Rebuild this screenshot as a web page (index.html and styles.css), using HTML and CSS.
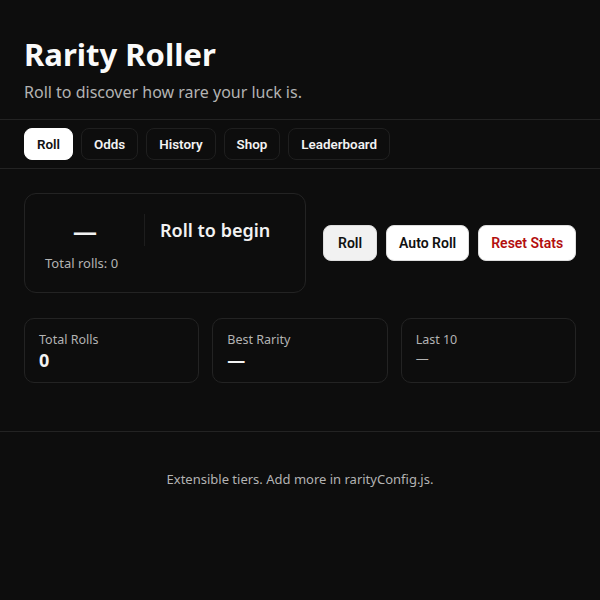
FILE: index.html
```html
<!DOCTYPE html>
<html lang="en">
<head>
<meta charset="utf-8">
<title>Rarity Roller</title>
<link rel="stylesheet" href="styles.css">
</head>
<body>
<header class="header">
  <h1 class="title">Rarity Roller</h1>
  <p class="subtitle">Roll to discover how rare your luck is.</p>
</header>
<nav class="tabs">
  <button class="tab active">Roll</button>
  <button class="tab">Odds</button>
  <button class="tab">History</button>
  <button class="tab">Shop</button>
  <button class="tab">Leaderboard</button>
</nav>
<main class="main">
  <section class="roll-row">
    <div class="result-card">
      <div class="result-top">
        <div class="rarity">—</div>
        <div class="divider"></div>
        <div class="result-label">Roll to begin</div>
      </div>
      <div class="result-sub">Total rolls: 0</div>
    </div>
    <div class="actions">
      <button class="btn btn-primary">Roll</button>
      <button class="btn">Auto Roll</button>
      <button class="btn btn-danger">Reset Stats</button>
    </div>
  </section>
  <section class="stats">
    <div class="stat">
      <div class="stat-label">Total Rolls</div>
      <div class="stat-value">0</div>
    </div>
    <div class="stat">
      <div class="stat-label">Best Rarity</div>
      <div class="stat-value">—</div>
    </div>
    <div class="stat">
      <div class="stat-label">Last 10</div>
      <div class="stat-value small">—</div>
    </div>
  </section>
</main>
<footer class="footer">Extensible tiers. Add more in rarityConfig.js.</footer>
</body>
</html>
```
FILE: styles.css
```css
* { box-sizing: border-box; }
html, body { margin: 0; padding: 0; }
body {
  background: #0d0d0d;
  color: #f2f2f2;
  font-family: "Noto Sans", "Open Sans", sans-serif;
  min-height: 600px;
}
.header {
  padding: 34px 24px 15px;
  border-bottom: 1px solid #232323;
}
.title {
  margin: 0;
  font-size: 31px;
  line-height: 40px;
  font-weight: 700;
  color: #fafafa;
}
.subtitle {
  margin: 6px 0 0;
  font-size: 16px;
  line-height: 24px;
  color: #b3b3b3;
}
.tabs {
  display: flex;
  gap: 8px;
  padding: 8px 24px;
  border-bottom: 1px solid #232323;
}
.tab {
  font-family: Roboto, sans-serif;
  font-size: 13.4px;
  font-weight: 600;
  height: 32px;
  padding: 0 12px;
  border-radius: 8px;
  border: 1px solid #1f1f1f;
  background: #0d0d0d;
  color: #f2f2f2;
}
.tab.active {
  background: #ffffff;
  color: #111;
  border-color: #ffffff;
}
.main {
  padding: 24px 24px 48px;
  border-bottom: 1px solid #232323;
}
.roll-row {
  display: flex;
  align-items: center;
  gap: 17px;
}
.result-card {
  flex: none;
  width: 282px;
  border: 1px solid #232323;
  border-radius: 12px;
  padding: 20px;
}
.result-top {
  display: flex;
  align-items: center;
  height: 32px;
}
.rarity {
  width: 80px;
  text-align: center;
  font-size: 24px;
  font-weight: 700;
}
.divider {
  width: 1px;
  height: 32px;
  background: #1d1d1d;
  margin: 0 15px 0 19px;
}
.result-label {
  font-size: 18px;
  font-weight: 600;
}
.result-sub {
  margin-top: 8px;
  font-size: 13px;
  line-height: 18px;
  color: #b3b3b3;
}
.actions {
  display: flex;
  flex: none;
  gap: 9px;
}
.btn {
  flex: none;
  white-space: nowrap;
  font-family: Roboto, sans-serif;
  font-size: 14px;
  font-weight: 600;
  height: 36px;
  padding: 0 12px;
  border-radius: 8px;
  border: 1px solid #ddd;
  background: #ffffff;
  color: #111;
}
.btn-primary { background: #f1f1f1; padding: 0 14px; }
.btn-danger { color: #b30f0f; }
.stats {
  margin-top: 25px;
  display: grid;
  grid-template-columns: repeat(3, 1fr);
  gap: 13px;
}
.stat {
  border: 1px solid #232323;
  border-radius: 10px;
  padding: 12px 14px;
  height: 65px;
}
.stat-label {
  font-size: 12.5px;
  line-height: 18px;
  color: #b3b3b3;
}
.stat-value {
  font-size: 18px;
  line-height: 22px;
  font-weight: 700;
}
.stat-value.small {
  font-size: 13px;
  font-weight: 400;
  color: #b3b3b3;
  line-height: 18px;
}
.footer {
  padding: 38px 24px;
  text-align: center;
  font-size: 13px;
  line-height: 18px;
  color: #b3b3b3;
}
```
